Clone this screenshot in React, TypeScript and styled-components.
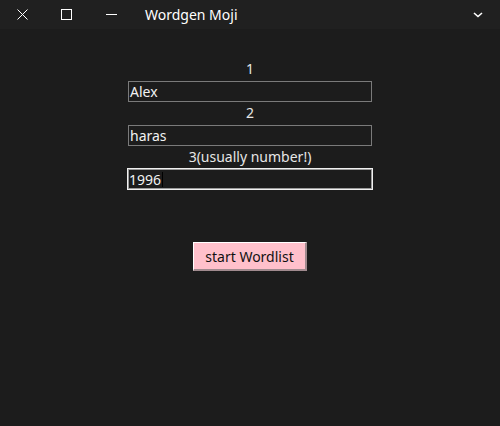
import React from "react";
import styled, { createGlobalStyle } from "styled-components";

const Global = createGlobalStyle`
  html, body { margin: 0; padding: 0; background: #1c1c1c; }
  body { font-family: "Noto Sans", sans-serif; }
`;

const Window = styled.div`
  width: 500px;
  height: 426px;
  background: #1c1c1c;
  display: flex;
  flex-direction: column;
`;

const TitleBar = styled.div`
  height: 29px;
  background: #202020;
  display: flex;
  align-items: center;
  color: #ffffff;
  flex-shrink: 0;
`;

const TitleBtn = styled.div<{ $w: number }>`
  width: ${(p) => p.$w}px;
  height: 29px;
  display: flex;
  align-items: center;
  justify-content: center;
  flex-shrink: 0;
`;

const Title = styled.div`
  font-size: 14px;
  color: #ffffff;
  flex: 1;
  margin-left: 12px;
`;

const Body = styled.div`
  display: flex;
  flex-direction: column;
  align-items: center;
  padding-top: 29px;
`;

const Label = styled.div`
  font-size: 14px;
  line-height: 20px;
  height: 23px;
  color: #e6e6e6;
  text-align: center;
  padding-top: 1px;
  box-sizing: border-box;
`;

const Field = styled.div<{ $focused?: boolean }>`
  width: ${(p) => (p.$focused ? 246 : 244)}px;
  height: ${(p) => (p.$focused ? 22 : 21)}px;
  margin-top: ${(p) => (p.$focused ? -1 : 0)}px;
  box-sizing: border-box;
  border: 1px solid ${(p) => (p.$focused ? "#f0f0f0" : "#7a7a7a")};
  outline: ${(p) => (p.$focused ? "1px solid #9a9a9a" : "none")};
  outline-offset: -2px;
  font-size: 14px;
  line-height: 19px;
  color: #f2f2f2;
  padding-left: 1px;
  display: flex;
  align-items: center;
`;

const Caret = styled.span`
  display: inline-block;
  width: 1px;
  height: 15px;
  background: #000;
  margin-left: 1px;
`;

const StartButton = styled.button`
  margin-top: 52px;
  width: 114px;
  height: 29px;
  background: #ffc0cb;
  color: #111;
  font-family: "Noto Sans", sans-serif;
  font-size: 14px;
  border: none;
  border-top: 1px solid #ffffff;
  border-left: 1px solid #ffffff;
  border-right: 2px solid #a08a8e;
  border-bottom: 2px solid #a08a8e;
  padding: 0;
  box-sizing: border-box;
`;

export default function App() {
  return (
    <>
      <Global />
      <Window>
        <TitleBar>
          <TitleBtn $w={44}>
            <svg width="11" height="11" viewBox="0 0 11 11">
              <path d="M0.5 0.5 L10.5 10.5 M10.5 0.5 L0.5 10.5" stroke="#fff" strokeWidth="1" />
            </svg>
          </TitleBtn>
          <TitleBtn $w={45}>
            <svg width="11" height="11" viewBox="0 0 11 11">
              <rect x="0.5" y="0.5" width="10" height="10" fill="none" stroke="#fff" strokeWidth="1" />
            </svg>
          </TitleBtn>
          <TitleBtn $w={44}>
            <svg width="11" height="11" viewBox="0 0 11 11">
              <path d="M0 5.5 H11" stroke="#fff" strokeWidth="1" />
            </svg>
          </TitleBtn>
          <Title>Wordgen Moji</Title>
          <TitleBtn $w={44}>
            <svg width="10" height="6" viewBox="0 0 10 6">
              <path d="M1 1 L5 4.5 L9 1" fill="none" stroke="#fff" strokeWidth="1.6" />
            </svg>
          </TitleBtn>
        </TitleBar>
        <Body>
          <Label>1</Label>
          <Field>Alex</Field>
          <Label>2</Label>
          <Field>haras</Field>
          <Label>3(usually number!)</Label>
          <Field $focused>
            1996
            <Caret />
          </Field>
          <StartButton>start Wordlist</StartButton>
        </Body>
      </Window>
    </>
  );
}
